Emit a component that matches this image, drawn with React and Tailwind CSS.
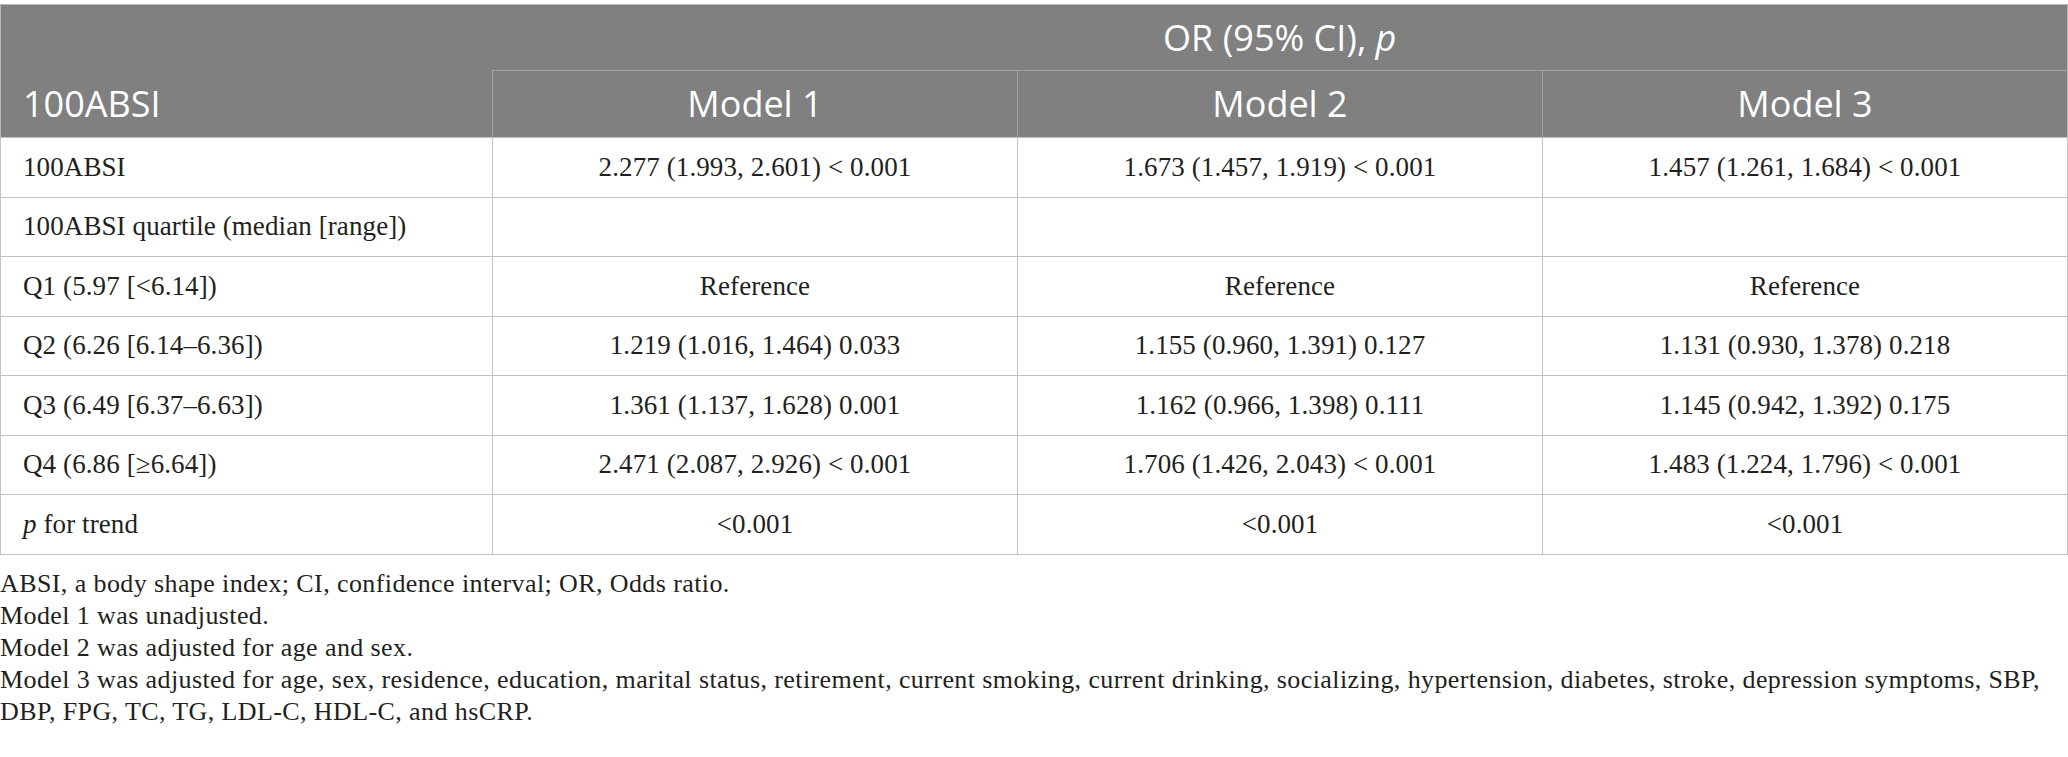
import React from 'react';

const serif = "font-['Liberation_Serif','Times_New_Roman',serif]";
const sans = "font-['Open_Sans','Noto_Sans',sans-serif]";

const rows = [
  ['100ABSI', '2.277 (1.993, 2.601) < 0.001', '1.673 (1.457, 1.919) < 0.001', '1.457 (1.261, 1.684) < 0.001'],
  ['100ABSI quartile (median [range])', '', '', ''],
  ['Q1 (5.97 [<6.14])', 'Reference', 'Reference', 'Reference'],
  ['Q2 (6.26 [6.14–6.36])', '1.219 (1.016, 1.464) 0.033', '1.155 (0.960, 1.391) 0.127', '1.131 (0.930, 1.378) 0.218'],
  ['Q3 (6.49 [6.37–6.63])', '1.361 (1.137, 1.628) 0.001', '1.162 (0.966, 1.398) 0.111', '1.145 (0.942, 1.392) 0.175'],
  ['Q4 (6.86 [≥6.64])', '2.471 (2.087, 2.926) < 0.001', '1.706 (1.426, 2.043) < 0.001', '1.483 (1.224, 1.796) < 0.001'],
  [<><i>p</i> for trend</>, '<0.001', '<0.001', '<0.001'],
];

const notes = [
  'ABSI, a body shape index; CI, confidence interval; OR, Odds ratio.',
  'Model 1 was unadjusted.',
  'Model 2 was adjusted for age and sex.',
  <>
    Model 3 was adjusted for age, sex, residence, education, marital status, retirement, current smoking, current drinking, socializing, hypertension, diabetes, stroke, depression symptoms, SBP,
    <br />
    DBP, FPG, TC, TG, LDL-C, HDL-C, and hsCRP.
  </>,
];

export default function App() {
  return (
    <div className="w-[2068px] bg-white pt-[4px]">
      <table className="w-full table-fixed border-collapse">
        <colgroup>
          <col className="w-[492px]" />
          <col className="w-[525px]" />
          <col className="w-[525px]" />
          <col />
        </colgroup>
        <thead className={`${sans} text-[36px] text-white`}>
          {/* Spanning header */}
          <tr className="h-[66px] bg-[#7f807f]">
            <th className="border-t border-l border-[#b9b9b9] border-b-[#a3a4a3]" />
            <th colSpan={3} className="border-t border-r border-b border-[#b9b9b9] border-b-[#a3a4a3] text-center font-normal leading-none">
              OR (95% CI), <i>p</i>
            </th>
          </tr>
          <tr className="h-[67px] bg-[#7f807f]">
            <th className="border-l border-[#b9b9b9] pl-[22px] text-left font-normal leading-none">100ABSI</th>
            <th className="border-l border-[#a3a4a3] text-center font-normal leading-none">Model 1</th>
            <th className="border-l border-[#a3a4a3] text-center font-normal leading-none">Model 2</th>
            <th className="border-l border-r border-[#a3a4a3] border-r-[#b9b9b9] text-center font-normal leading-none">Model 3</th>
          </tr>
        </thead>
        <tbody className={`${serif} text-[27px] tracking-[0.1px] text-[#231f20]`}>
          {rows.map((r, i) => (
            <tr key={i} className="h-[59.5px]">
              {r.map((c, j) => (
                <td
                  key={j}
                  className={`border-[1.5px] border-[#c3c3c3] leading-none ${j === 0 ? 'pl-[22px] text-left' : 'text-center'}`}
                >
                  {c}
                </td>
              ))}
            </tr>
          ))}
        </tbody>
      </table>

      {/* Footnotes */}
      <div className={`${serif} mt-[13px] text-[26px] tracking-[0.4px] leading-[32px] text-[#231f20] whitespace-nowrap`}>
        {notes.map((n, i) => (
          <p key={i}>{n}</p>
        ))}
      </div>
    </div>
  );
}
